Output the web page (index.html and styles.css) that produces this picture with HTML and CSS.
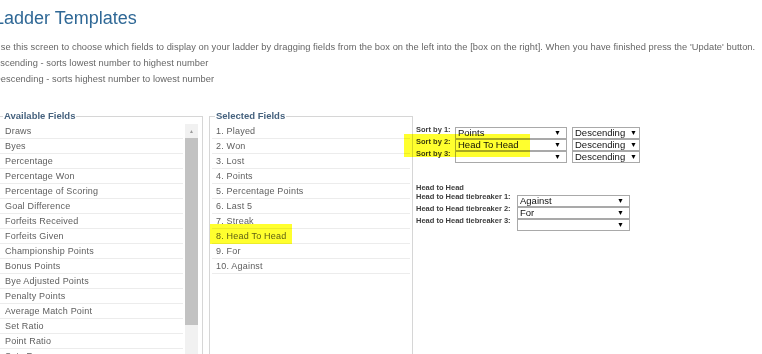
FILE: index.html
```html
<!DOCTYPE html>
<html lang="en">
<head>
    <meta charset="UTF-8">
    <title>Ladder Templates</title>
    <link rel="stylesheet" href="styles.css">
</head>
<body>

<div class="page">
    <h1 class="title">Ladder Templates</h1>
    <p class="intro">
        Use this screen to choose which fields to display on your ladder by dragging fields from the box on the left into the [box on the right]. When you have finished press the 'Update' button.<br>
        Ascending - sorts lowest number to highest number<br>
        Descending - sorts highest number to lowest number
    </p>

    <div class="editor">
        <fieldset class="field-box available">
            <legend>Available Fields</legend>
            <div class="list-wrap">
                <ul class="field-list">
                    <li>Draws</li>
                    <li>Byes</li>
                    <li>Percentage</li>
                    <li>Percentage Won</li>
                    <li>Percentage of Scoring</li>
                    <li>Goal Difference</li>
                    <li>Forfeits Received</li>
                    <li>Forfeits Given</li>
                    <li>Championship Points</li>
                    <li>Bonus Points</li>
                    <li>Bye Adjusted Points</li>
                    <li>Penalty Points</li>
                    <li>Average Match Point</li>
                    <li>Set Ratio</li>
                    <li>Point Ratio</li>
                    <li>Sets For</li>
                </ul>
                <div class="scrollbar">
                    <div class="scroll-up">&#9650;</div>
                    <div class="scroll-thumb"></div>
                </div>
            </div>
        </fieldset>

        <fieldset class="field-box selected">
            <legend>Selected Fields</legend>
            <ul class="field-list">
                <li>1. Played</li>
                <li>2. Won</li>
                <li>3. Lost</li>
                <li>4. Points</li>
                <li>5. Percentage Points</li>
                <li>6. Last 5</li>
                <li>7. Streak</li>
                <li>8. Head To Head</li>
                <li>9. For</li>
                <li>10. Against</li>
            </ul>
        </fieldset>

        <div class="sort-panel">
            <div class="sort-grid">
                <span class="label">Sort by 1:</span>
                <div class="select wide"><span>Points</span><i>&#9660;</i></div>
                <div class="select order"><span>Descending</span><i>&#9660;</i></div>

                <span class="label">Sort by 2:</span>
                <div class="select wide"><span>Head To Head</span><i>&#9660;</i></div>
                <div class="select order"><span>Descending</span><i>&#9660;</i></div>

                <span class="label">Sort by 3:</span>
                <div class="select wide"><span></span><i>&#9660;</i></div>
                <div class="select order"><span>Descending</span><i>&#9660;</i></div>
            </div>

            <div class="h2h-title">Head to Head</div>
            <div class="h2h-grid">
                <span class="label">Head to Head tiebreaker 1:</span>
                <div class="select tb"><span>Against</span><i>&#9660;</i></div>
                <span class="label">Head to Head tiebreaker 2:</span>
                <div class="select tb"><span>For</span><i>&#9660;</i></div>
                <span class="label">Head to Head tiebreaker 3:</span>
                <div class="select tb"><span></span><i>&#9660;</i></div>
            </div>
        </div>
    </div>
</div>

<div class="marker marker-field"></div>
<div class="marker marker-sort"></div>

</body>
</html>
```

FILE: styles.css
```css
body {
    margin: 0;
    overflow: hidden;
    background-color: #fff;
    font-family: 'Liberation Sans', Arial, sans-serif;
    color: #5e5e5e;
}

.page {
    margin-left: -6px;
    padding-top: 5px;
}

.title {
    margin: 0;
    font-size: 18px;
    font-weight: normal;
    line-height: 26px;
    color: #2f6896;
}

.intro {
    margin: 8px 0 0;
    font-size: 9.3px;
    letter-spacing: 0.05px;
    line-height: 16px;
    color: #666;
    white-space: nowrap;
}

.editor {
    display: flex;
    align-items: flex-start;
    margin-top: 23px;
}

.field-box {
    box-sizing: border-box;
    height: 300px;
    margin: 0;
    padding: 2px 0 0;
    border: 1px solid #d6d6d6;
}

.field-box legend {
    padding: 0 1px;
    font-size: 9.5px;
    font-weight: bold;
    line-height: 12px;
    color: #46627e;
}

.available {
    width: 207px;
    margin-left: 2px;
}

.available legend {
    margin-left: 6px;
}

.selected {
    width: 204px;
    margin-left: 6px;
    padding-left: 2px;
    padding-right: 2px;
}

.selected legend {
    margin-left: 3px;
}

.list-wrap {
    display: flex;
}

.field-list {
    flex: 1;
    list-style: none;
    margin: 0;
    padding: 0;
}

.field-list li {
    height: 14px;
    line-height: 15px;
    padding-left: 8px;
    border-bottom: 1px solid #ececec;
    font-size: 9px;
    letter-spacing: 0.2px;
    color: #5e5e5e;
    white-space: nowrap;
}

.selected .field-list li {
    padding-left: 4px;
}

.scrollbar {
    width: 13px;
    height: 240px;
    margin-left: 2px;
    margin-right: 4px;
    background-color: #f1f1f1;
}

.scroll-up {
    height: 14px;
    font-size: 5px;
    line-height: 15px;
    text-align: center;
    color: #9a9a9a;
}

.scroll-thumb {
    height: 187px;
    background-color: #c2c2c2;
}

.sort-panel {
    margin-left: 3px;
    padding-top: 17px;
}

.sort-grid {
    display: grid;
    grid-template-columns: 34px 112px 68px;
    grid-auto-rows: 12px;
    column-gap: 5px;
}

.label {
    margin-top: -1px;
    font-size: 7.5px;
    font-weight: bold;
    line-height: 8px;
    color: #3d3d3d;
    white-space: nowrap;
}

.select {
    box-sizing: border-box;
    display: flex;
    justify-content: space-between;
    align-items: flex-end;
    height: 12px;
    border: 1px solid #a9a9a9;
    background-color: #fff;
    font-size: 9.5px;
    line-height: 10px;
    color: #111;
}

.select span {
    padding-left: 2px;
}

.select i {
    font-style: normal;
    font-size: 7px;
    line-height: 10px;
    padding-right: 5px;
    color: #000;
}

.select.order i {
    padding-right: 2px;
}

.h2h-title {
    margin-top: 20px;
    font-size: 7.5px;
    font-weight: bold;
    line-height: 9px;
    color: #3d3d3d;
}

.h2h-grid {
    display: grid;
    grid-template-columns: 101px 113px;
    grid-auto-rows: 12px;
    margin-top: 3px;
}

.h2h-grid .label {
    margin-top: -2px;
}

.marker {
    position: absolute;
    background-color: #ffff2e;
    mix-blend-mode: multiply;
}

.marker-field {
    left: 210px;
    top: 224px;
    width: 82px;
    height: 20px;
}

.marker-sort {
    left: 404px;
    top: 134px;
    width: 126px;
    height: 23px;
}
```
